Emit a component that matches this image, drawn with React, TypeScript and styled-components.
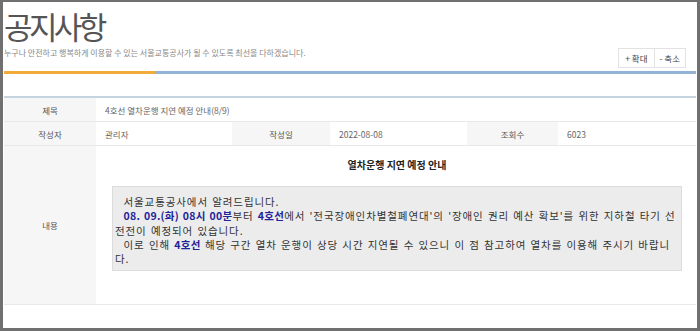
import * as React from 'react';
import styled, { createGlobalStyle } from 'styled-components';

const GlobalStyle = createGlobalStyle`
  html, body {
    margin: 0;
    padding: 0;
    background: #ffffff;
  }
  body {
    font-family: "Noto Sans CJK KR", "Noto Sans", sans-serif;
  }
`

const Frame = styled.div`
  box-sizing: border-box;
  width: 700px;
  height: 331px;
  border: 3px solid #707070;
  border-top-width: 2px;
  padding: 0 1px;
  background: #fff;
  overflow: hidden;
`

const Header = styled.div`
  display: flex;
  justify-content: space-between;
  align-items: flex-end;
`

const TitleBlock = styled.div`
  padding: 6px 0 12px 0;
`

const Title = styled.h1`
  margin: 0 0 3px 0;
  font-size: 31px;
  line-height: 36px;
  font-weight: 400;
  letter-spacing: -3.6px;
  color: #555;
`

const Subtitle = styled.p`
  margin: 0;
  font-size: 8px;
  line-height: 12px;
  letter-spacing: 0;
  color: #888;
`

const ZoomButtons = styled.div`
  display: flex;
  margin: 0 10px 3px 0;
  border: 1px solid #e2e2e2;
`

const ZoomButton = styled.button`
  height: 18px;
  padding: 0 ${p => p.$pad}px;
  border: 0;
  border-left: ${p => (p.$first ? '0' : '1px solid #e2e2e2')};
  background: #fff;
  font-family: inherit;
  font-size: 8.5px;
  color: #444;
  cursor: pointer;
`

const Bar = styled.div`
  height: 3px;
  background: linear-gradient(to right, #f1ab38 0, #f1ab38 151px, #94b2d6 151px, #94b2d6 100%);
`

const Table = styled.div`
  display: grid;
  grid-template-columns: 92px 136px 98px 137px 91px 138px;
  margin-top: 22px;
  border-top: 2px solid #c5d4df;
`

const Cell = styled.div`
  grid-column: span ${p => p.$span || 1};
  display: flex;
  align-items: center;
  justify-content: ${p => (p.$label ? 'center' : 'flex-start')};
  height: ${p => p.$height || 23}px;
  padding-left: ${p => (p.$label ? 0 : 9)}px;
  border-bottom: 1px solid #e8e8e8;
  background: ${p => (p.$label ? '#f6f6f6' : '#fff')};
  font-size: 8.5px;
  color: ${p => (p.$label ? '#555' : '#666')};
`

const ContentCell = styled.div`
  grid-column: span 5;
  padding: 12px 14px 32px 16px;
  border-bottom: 1px solid #e8e8e8;
`

const NoticeHeading = styled.h2`
  margin: 0 0 14px 0;
  text-align: center;
  font-size: 10px;
  line-height: 14px;
  font-weight: 700;
  color: #222;
`

const NoticeBox = styled.div`
  padding: 8px 2px 4px 2px;
  border: 1px solid #dcdcdc;
  background: #ececec;
  font-size: 10.5px;
  line-height: 14.3px;
  letter-spacing: 0.9px;
  word-spacing: 1px;
  color: #333;
  white-space: pre;
`

const Strong = styled.b`
  color: #22229a;
  letter-spacing: 0.3px;
`

export default function App() {
  return <>
    <GlobalStyle />
    <Frame>
      <Header>
        <TitleBlock>
          <Title>공지사항</Title>
          <Subtitle>누구나 안전하고 행복하게 이용할 수 있는 서울교통공사가 될 수 있도록 최선을 다하겠습니다.</Subtitle>
        </TitleBlock>
        <ZoomButtons>
          <ZoomButton $first $pad={6}>+ 확대</ZoomButton>
          <ZoomButton $pad={5}>- 축소</ZoomButton>
        </ZoomButtons>
      </Header>
      <Bar />
      <Table>
        <Cell $label>제목</Cell>
        <Cell $span={5}>4호선 열차운행 지연 예정 안내(8/9)</Cell>

        <Cell $label>작성자</Cell>
        <Cell>관리자</Cell>
        <Cell $label>작성일</Cell>
        <Cell>2022-08-08</Cell>
        <Cell $label>조회수</Cell>
        <Cell>6023</Cell>

        <Cell $label $height={158}>내용</Cell>
        <ContentCell>
          <NoticeHeading>열차운행 지연 예정 안내</NoticeHeading>
          <NoticeBox>
            {'  서울교통공사에서 알려드립니다.'}<br />
            {'  '}<Strong>08. 09.(화) 08시 00분</Strong>부터 <Strong>4호선</Strong>에서 '전국장애인차별철폐연대'의 '장애인 권리 예산 확보'를 위한 지하철 타기 선<br />
            전전이 예정되어 있습니다.<br />
            {'  '}이로 인해 <Strong>4호선</Strong> 해당 구간 열차 운행이 상당 시간 지연될 수 있으니 이 점 참고하여 열차를 이용해 주시기 바랍니<br />
            다.
          </NoticeBox>
        </ContentCell>
      </Table>
    </Frame>
  </>
}
